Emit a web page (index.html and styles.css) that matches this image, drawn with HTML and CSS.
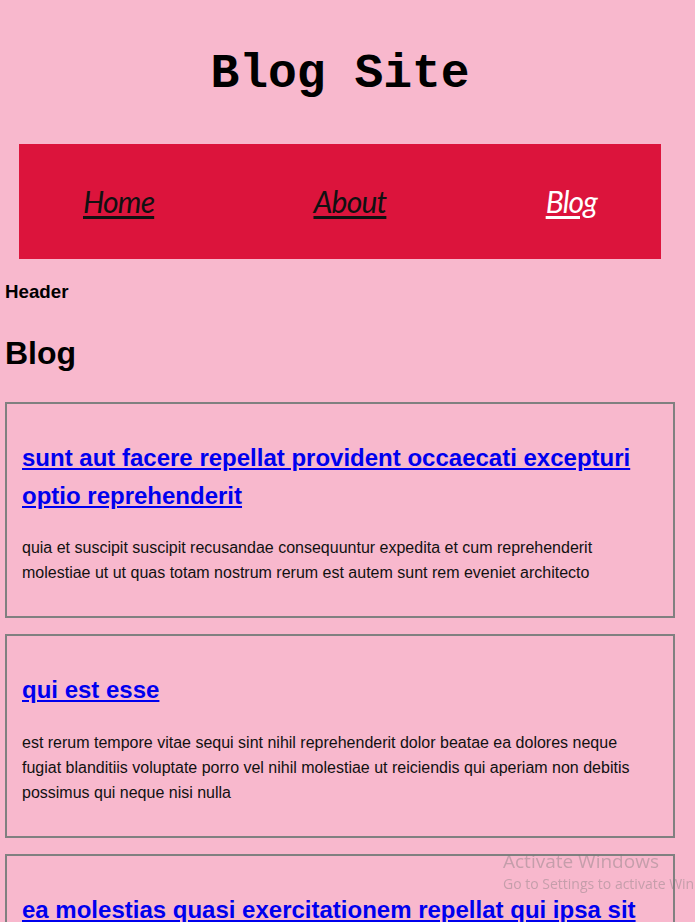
FILE: index.html
```html
<!DOCTYPE html>
<html>
<head>
<meta charset="utf-8">
<link rel="stylesheet" href="styles.css">
</head>
<body>
<div class="page">
  <h1 class="site-title">Blog Site</h1>
  <nav class="nav">
    <a class="nav-link" href="#">Home</a>
    <a class="nav-link" href="#">About</a>
    <a class="nav-link active" href="#">Blog</a>
  </nav>
  <h3 class="header-label">Header</h3>
  <h2 class="page-title">Blog</h2>
  <div class="posts">
    <article class="post">
      <h2 class="post-title"><a href="#">sunt aut facere repellat provident occaecati excepturi optio reprehenderit</a></h2>
      <p class="post-body">quia et suscipit suscipit recusandae consequuntur expedita et cum reprehenderit molestiae ut ut quas totam nostrum rerum est autem sunt rem eveniet architecto</p>
    </article>
    <article class="post">
      <h2 class="post-title"><a href="#">qui est esse</a></h2>
      <p class="post-body">est rerum tempore vitae sequi sint nihil reprehenderit dolor beatae ea dolores neque fugiat blanditiis voluptate porro vel nihil molestiae ut reiciendis qui aperiam non debitis possimus qui neque nisi nulla</p>
    </article>
    <article class="post">
      <h2 class="post-title"><a href="#">ea molestias quasi exercitationem repellat qui ipsa sit aut</a></h2>
      <p class="post-body">et iusto sed quo iure voluptatem occaecati omnis eligendi aut ad voluptatem doloribus vel accusantium quis pariatur molestiae porro eius odio et labore et velit aut</p>
    </article>
  </div>
</div>
<div class="watermark">
  <div class="wm-title">Activate Windows</div>
  <div class="wm-sub">Go to Settings to activate Windows.</div>
</div>
</body>
</html>
```
FILE: styles.css
```css
html, body {
  margin: 0;
  padding: 0;
  background: #f8b8cd;
  overflow: hidden;
}
body {
  font-family: "Liberation Sans", Arial, sans-serif;
  color: #000;
}
.page {
  width: 670px;
  padding: 0 5px;
}
.site-title {
  font-family: "Liberation Mono", "Courier New", monospace;
  font-size: 48px;
  font-weight: bold;
  text-align: center;
  margin: 0;
  padding-top: 46px;
  line-height: 1.2;
}
.nav {
  margin: 40px 14px 0;
  height: 115px;
  background: #dc143c;
  display: flex;
  justify-content: space-between;
  align-items: center;
  padding: 0 64px;
}
.nav-link {
  font-family: Lato, "Open Sans", sans-serif;
  font-style: italic;
  font-size: 30px;
  color: #111;
  text-decoration: underline;
  text-decoration-thickness: 3px;
  text-underline-offset: 3px;
  letter-spacing: -0.8px;
}
.nav-link.active {
  color: #fff;
}
.header-label {
  font-size: 18.72px;
  margin: 22px 0 20px;
}
.page-title {
  font-size: 32px;
  margin: 32px 0 30px;
}
.post {
  border: 2px solid #808080;
  padding: 15px 15px;
  margin-bottom: 16px;
}
.post-title {
  font-size: 24px;
  line-height: 38.4px;
  margin: 20px 0;
}
.post-title a {
  color: #0000ee;
}
.post-body {
  font-size: 16px;
  line-height: 25px;
  margin: 16px 0;
  color: #111;
}
.watermark {
  position: fixed;
  left: 503px;
  top: 849px;
  color: rgba(120, 120, 120, 0.4);
  font-family: "Open Sans", sans-serif;
  white-space: nowrap;
}
.wm-title {
  font-size: 19px;
  line-height: 24px;
}
.wm-sub {
  font-size: 14px;
  line-height: 22px;
}
```
